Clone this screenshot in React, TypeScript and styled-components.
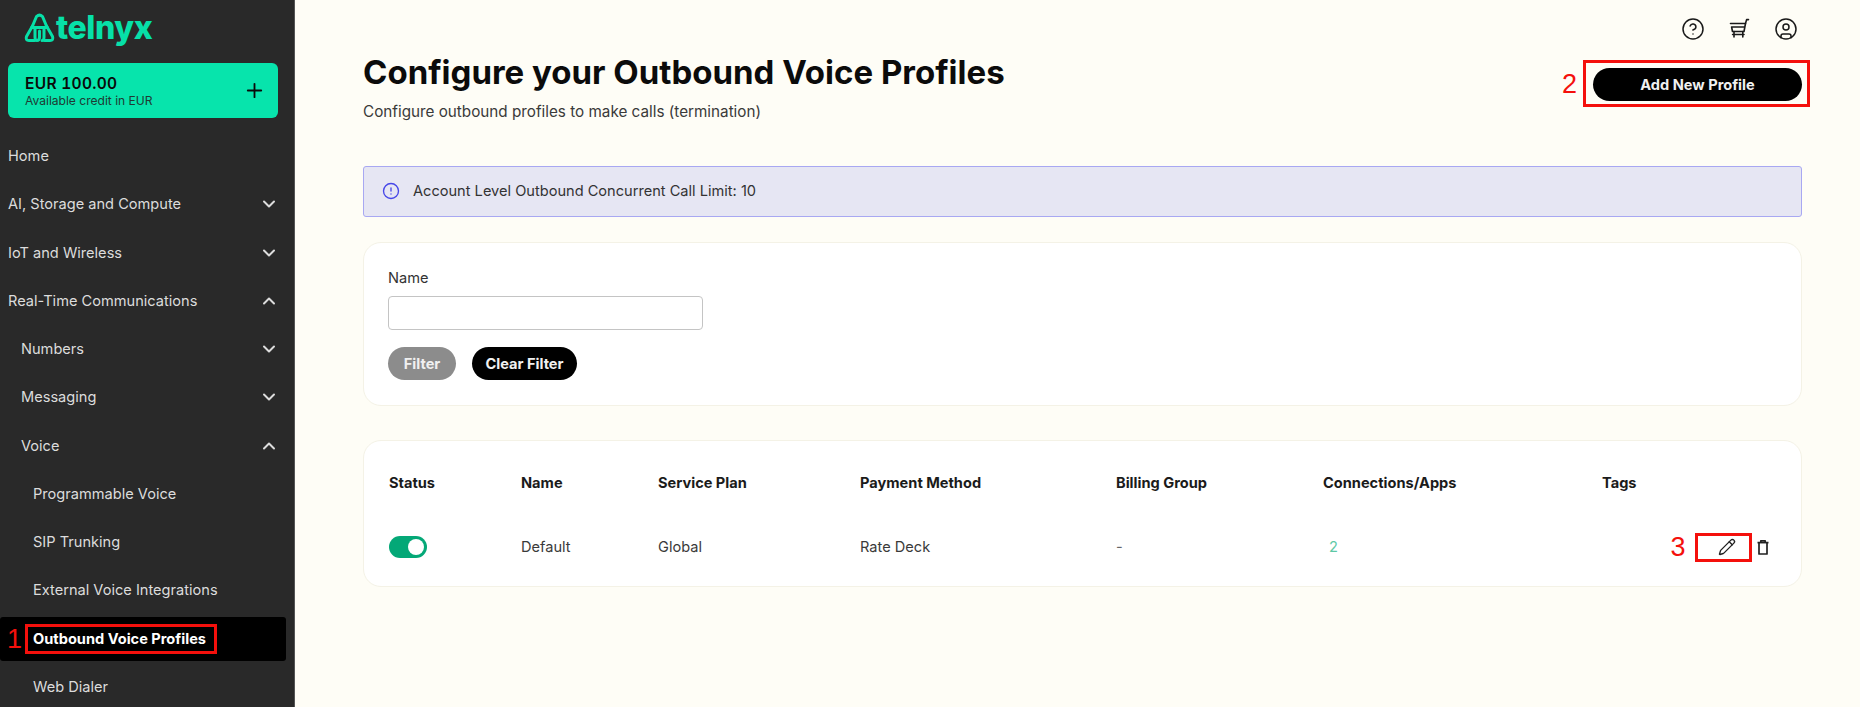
import React from "react";
import styled, { createGlobalStyle } from "styled-components";
import { ChevronDown, ChevronUp, Plus, CircleHelp, CircleUser, Pencil, CircleAlert } from "lucide-react";

const Global = createGlobalStyle`
  html, body { margin: 0; height: 100%; background: #fefdf6; }
  #root { height: 100%; }
  * { box-sizing: border-box; }
  body { font-family: Inter, "Liberation Sans", sans-serif; overflow: hidden; }
`;

const Shell = styled.div`
  display: flex;
  width: 1860px;
  height: 707px;
  overflow: hidden;
  background: #fefdf6;
`;

const Sidebar = styled.aside`
  width: 295px;
  flex: none;
  height: 707px;
  overflow: hidden;
  background: #292929;
  border-right: 1px solid #555;
  padding-top: 13px;
`;

const Logo = styled.div`
  display: flex;
  align-items: center;
  gap: 1px;
  height: 30px;
  padding-left: 24px;
  color: #07e0a8;
`;

const LogoText = styled.span`
  font-family: Inter, sans-serif;
  font-weight: 800;
  font-size: 32px;
  letter-spacing: -0.4px;
  line-height: 30px;
`;

const Credit = styled.div`
  margin: 20px 16px 0 8px;
  width: 270px;
  height: 55px;
  border-radius: 6px;
  background: #07e4ac;
  display: flex;
  align-items: center;
  justify-content: space-between;
  padding: 0 12px 0 17px;
  color: #0a0a0a;
`;

const CreditText = styled.div`
  display: flex;
  flex-direction: column;
  padding-top: 1px;
`;

const CreditAmount = styled.span`
  font-size: 15.5px;
  font-weight: 600;
  line-height: 18px;
  letter-spacing: 0.3px;
  font-variant-numeric: tabular-nums;
`;

const CreditNote = styled.span`
  font-size: 12.05px;
  line-height: 15px;
  color: #1f3a33;
`;

const Nav = styled.nav`
  margin-top: 16px;
  display: flex;
  flex-direction: column;
`;

const NavRow = styled.div<{ $level?: number; $active?: boolean }>`
  position: relative;
  height: 44px;
  margin-bottom: 4.27px;
  display: flex;
  align-items: center;
  justify-content: space-between;
  width: 286px;
  padding-left: ${(p) => [8, 21, 33][p.$level ?? 0]}px;
  padding-right: 7px;
  font-size: 14.6px;
  color: ${(p) => (p.$active ? "#fff" : "#dcdcdc")};
  font-weight: ${(p) => (p.$active ? 700 : 400)};
  background: ${(p) => (p.$active ? "#000" : "transparent")};
  border-radius: 3px;
`;

const NavLabel = styled.span`
  position: relative;
`;

const Callout = styled.span<{ $t: number; $r: number; $b: number; $l: number }>`
  position: absolute;
  top: ${(p) => p.$t}px;
  right: ${(p) => p.$r}px;
  bottom: ${(p) => p.$b}px;
  left: ${(p) => p.$l}px;
  border: 3px solid #f4100c;
  pointer-events: none;
`;

const CalloutNumber = styled.span<{ $t: number; $l: number }>`
  position: absolute;
  top: ${(p) => p.$t}px;
  left: ${(p) => p.$l}px;
  color: #f4100c;
  font-family: "Liberation Sans", sans-serif;
  font-weight: 400;
  font-size: 27px;
  line-height: 28px;
`;

const Main = styled.main`
  flex: 1;
  padding: 0 58px 0 68px;
  min-width: 0;
`;

const TopIcons = styled.div`
  height: 44px;
  padding-top: 17px;
  display: flex;
  justify-content: flex-end;
  gap: 23.5px;
  padding-right: 4px;
  color: #1a1a1a;
`;

const CartBox = styled.span`
  display: flex;
  padding-top: 1px;
`;

const Header = styled.header`
  display: flex;
  justify-content: space-between;
  align-items: flex-start;
  height: 122px;
`;

const HeaderText = styled.div`
  padding-top: 10px;
`;

const Title = styled.h1`
  margin: 0;
  font-size: 33px;
  font-weight: 700;
  line-height: 36px;
  color: #0b0b0b;
`;

const Subtitle = styled.p`
  margin: 13px 0 0;
  font-size: 15.25px;
  line-height: 18px;
  color: #3a3a3a;
`;

const Button = styled.button<{ $muted?: boolean; $w: number }>`
  position: relative;
  width: ${(p) => p.$w}px;
  height: 33px;
  border: none;
  border-radius: 17px;
  background: ${(p) => (p.$muted ? "#8c8c8c" : "#000")};
  color: #f0f0f0;
  font-family: inherit;
  font-size: 14.6px;
  font-weight: 700;
  padding: 0;
`;

const PrimaryWrap = styled.div`
  margin-top: 24px;
`;

const Alert = styled.div`
  height: 51px;
  background: #e6e6f3;
  border: 1px solid #a8a8f2;
  border-radius: 3px;
  display: flex;
  align-items: center;
  gap: 13px;
  padding-left: 18px;
  padding-bottom: 1px;
  font-size: 14.6px;
  color: #333;
`;

const AlertIcon = styled(CircleAlert)`
  color: #4646e8;
`;

const Card = styled.section<{ $h: number; $mt: number; $px: number }>`
  height: ${(p) => p.$h}px;
  margin-top: ${(p) => p.$mt}px;
  background: #fff;
  border: 1px solid #f4f2e6;
  border-radius: 18px;
  padding: 0 ${(p) => p.$px}px;
`;

const FieldLabel = styled.label`
  display: block;
  margin-top: 26px;
  font-size: 14.6px;
  line-height: 18px;
  color: #333;
`;

const Input = styled.input`
  display: block;
  width: 315px;
  height: 34px;
  margin-top: 9px;
  border: 1px solid #c4c4c4;
  border-radius: 4px;
  background: #fff;
`;

const ButtonRow = styled.div`
  display: flex;
  gap: 16px;
  margin-top: 17px;
`;

const Table = styled.div`
  display: grid;
  grid-template-columns: 132px 137px 202px 256px 207px 279px 1fr;
  padding-top: 32px;
`;

const HeadCell = styled.div`
  font-size: 14.6px;
  font-weight: 700;
  line-height: 20px;
  color: #1b1b1b;
  height: 63px;
`;

const Cell = styled.div<{ $accent?: boolean; $muted?: boolean }>`
  font-size: 14.6px;
  height: 22px;
  line-height: 22px;
  color: ${(p) => (p.$accent ? "#5ec8a5" : p.$muted ? "#666" : "#3a3a3a")};
  padding-left: ${(p) => (p.$accent ? "6px" : 0)};
`;

const Toggle = styled.span`
  display: block;
  position: relative;
  width: 38px;
  height: 22px;
  border-radius: 11px;
  background: #04a877;
  &::after {
    content: "";
    position: absolute;
    right: 3px;
    top: 3px;
    width: 16px;
    height: 16px;
    border-radius: 50%;
    background: #fff;
  }
`;

const Actions = styled.div`
  display: flex;
  justify-content: flex-end;
  align-items: center;
  height: 22px;
  color: #222;
  padding-right: 7.5px;
`;

const EditBox = styled.span`
  position: relative;
  flex: none;
  width: 57px;
  height: 29px;
  margin-right: 5px;
  padding-left: 7px;
  display: flex;
  justify-content: center;
  align-items: center;
`;

const CartIcon = () => (
  <svg width="22" height="22" viewBox="0 0 22 22" fill="none" stroke="#1a1a1a" strokeWidth="1.6" strokeLinecap="round" strokeLinejoin="round">
    <path d="M1.5 5.5H16.5L15 13.5H3.5L2.6 9H15.5" />
    <path d="M16.5 5.5L17.6 1.6H19.5" />
    <path d="M5 13.5V19M13.8 13.5V19M3.6 16.5H15" />
  </svg>
);

const TrashIcon = () => (
  <svg width="12" height="15" viewBox="0 0 12 15" fill="none" stroke="#222" strokeWidth="1.7" strokeLinejoin="round">
    <path d="M0.5 2.6H11.5" />
    <path d="M3.8 2.4V0.9H8.2V2.4" />
    <path d="M2 2.8V14H10V2.8" />
  </svg>
);

const LogoMark = () => (
  <svg width="31" height="30" viewBox="0 0 31 30" fill="none" stroke="#07e0a8" strokeWidth="3" strokeLinecap="round" strokeLinejoin="round">
    <path d="M8.5 13L12.5 3.5Q15.5 0.6 18.5 3.5L22.5 13" />
    <path d="M8.5 13L2.5 23.5Q1.2 27.5 5 27.5H10.5" />
    <path d="M22.5 13L28.5 23.5Q29.8 27.5 26 27.5H20.5" />
    <path d="M7.5 14.5H23.5" />
    <path d="M11 14.5V24Q11 27.5 13 27.5Q15.5 27.5 15.5 24V18" />
    <path d="M20 14.5V24Q20 27.5 18 27.5" />
  </svg>
);

const nav: { label: string; level?: number; chevron?: "up" | "down"; active?: boolean }[] = [
  { label: "Home" },
  { label: "AI, Storage and Compute", chevron: "down" },
  { label: "IoT and Wireless", chevron: "down" },
  { label: "Real-Time Communications", chevron: "up" },
  { label: "Numbers", level: 1, chevron: "down" },
  { label: "Messaging", level: 1, chevron: "down" },
  { label: "Voice", level: 1, chevron: "up" },
  { label: "Programmable Voice", level: 2 },
  { label: "SIP Trunking", level: 2 },
  { label: "External Voice Integrations", level: 2 },
  { label: "Outbound Voice Profiles", level: 2, active: true },
  { label: "Web Dialer", level: 2 },
];

const columns = ["Status", "Name", "Service Plan", "Payment Method", "Billing Group", "Connections/Apps", "Tags"];

export default function App() {
  return (
    <Shell>
      <Global />
      <Sidebar>
        <Logo>
          <LogoMark />
          <LogoText>telnyx</LogoText>
        </Logo>
        <Credit>
          <CreditText>
            <CreditAmount>EUR 100.00</CreditAmount>
            <CreditNote>Available credit in EUR</CreditNote>
          </CreditText>
          <Plus size={23} strokeWidth={1.9} />
        </Credit>
        <Nav>
          {nav.map((item) => (
            <NavRow key={item.label} $level={item.level} $active={item.active}>
              <NavLabel>
                {item.label}
                {item.active && (
                  <>
                    <Callout $t={-6} $r={-11} $b={-6} $l={-8} />
                    <CalloutNumber $t={-5} $l={-26}>1</CalloutNumber>
                  </>
                )}
              </NavLabel>
              {item.chevron === "down" && <ChevronDown size={20} strokeWidth={2.4} />}
              {item.chevron === "up" && <ChevronUp size={20} strokeWidth={2.4} />}
            </NavRow>
          ))}
        </Nav>
      </Sidebar>
      <Main>
        <TopIcons>
          <CircleHelp size={24} strokeWidth={1.5} />
          <CartBox><CartIcon /></CartBox>
          <CircleUser size={24} strokeWidth={1.5} />
        </TopIcons>
        <Header>
          <HeaderText>
            <Title>Configure your Outbound Voice Profiles</Title>
            <Subtitle>Configure outbound profiles to make calls (termination)</Subtitle>
          </HeaderText>
          <PrimaryWrap>
            <Button $w={209}>
              Add New Profile
              <Callout $t={-8} $r={-8} $b={-6} $l={-10} />
              <CalloutNumber $t={2} $l={-31}>2</CalloutNumber>
            </Button>
          </PrimaryWrap>
        </Header>
        <Alert>
          <AlertIcon size={18} strokeWidth={1.8} />
          Account Level Outbound Concurrent Call Limit: 10
        </Alert>
        <Card $h={164} $mt={25} $px={24}>
          <FieldLabel>Name</FieldLabel>
          <Input aria-label="Name" />
          <ButtonRow>
            <Button $muted $w={68}>Filter</Button>
            <Button $w={105}>Clear Filter</Button>
          </ButtonRow>
        </Card>
        <Card $h={147} $mt={34} $px={25}>
          <Table>
            {columns.map((c) => (
              <HeadCell key={c}>{c}</HeadCell>
            ))}
            <Cell><Toggle /></Cell>
            <Cell>Default</Cell>
            <Cell>Global</Cell>
            <Cell>Rate Deck</Cell>
            <Cell $muted>-</Cell>
            <Cell $accent>2</Cell>
            <Actions>
              <EditBox>
                <Pencil size={18} strokeWidth={1.8} />
                <Callout $t={0} $r={0} $b={0} $l={0} />
                <CalloutNumber $t={0} $l={-24}>3</CalloutNumber>
              </EditBox>
              <TrashIcon />
            </Actions>
          </Table>
        </Card>
      </Main>
    </Shell>
  );
}
